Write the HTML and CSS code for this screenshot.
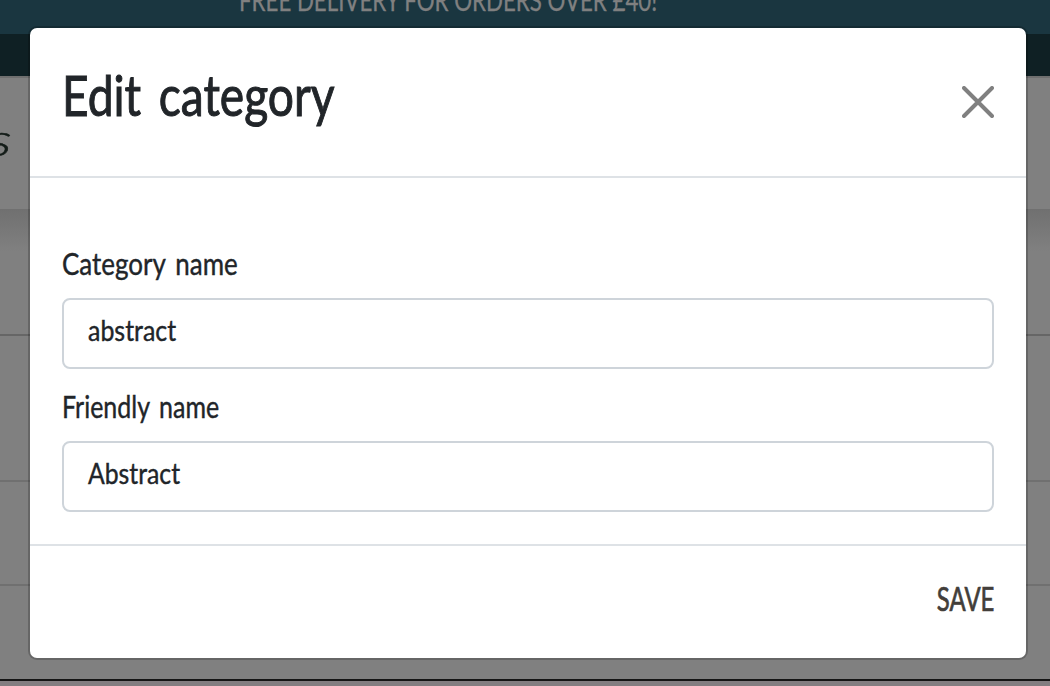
FILE: index.html
```html
<!DOCTYPE html>
<html lang="en">
<head>
<meta charset="utf-8">
<title>Edit category</title>
<link rel="stylesheet" href="styles.css">
</head>
<body>
<div class="page">
  <div class="banner"><span class="banner-text">FREE DELIVERY FOR ORDERS OVER £40!</span></div>
  <div class="nav"></div>
  <div class="brand"><span class="brand-text">s</span></div>
  <div class="row row-first"></div>
  <div class="row row-second"></div>
  <div class="row row-third"></div>
  <div class="row row-last"></div>
  <div class="page-end"></div>
</div>
<div class="modal" role="dialog">
  <div class="modal-header">
    <h1 class="title"><span class="title-text">Edit category</span></h1>
    <button class="close" aria-label="Close">
      <svg class="close-icon" width="32" height="32" viewBox="0 0 16 16" fill="none" stroke="currentColor" stroke-width="2" stroke-linecap="round"><path d="M1 1 15 15M15 1 1 15"/></svg>
    </button>
  </div>
  <div class="modal-body">
    <div class="label"><span class="label-category">Category name</span></div>
    <div class="field"><span class="value-category">abstract</span></div>
    <div class="label"><span class="label-friendly">Friendly name</span></div>
    <div class="field"><span class="value-friendly">Abstract</span></div>
  </div>
  <div class="modal-footer"><button class="save"><span class="save-text">SAVE</span></button></div>
</div>
</body>
</html>
```
FILE: styles.css
```css
* { box-sizing: border-box; }
body { margin: 0; width: 1050px; height: 686px; overflow: hidden; position: relative; font-family: Lato, "Open Sans", sans-serif; color: #212529; background: #808080; }
span { display: inline-block; white-space: nowrap; transform-origin: left center; }
.page { height: 686px; display: flex; flex-direction: column; overflow: hidden; }
.banner { height: 34px; flex: none; display: flex; align-items: flex-start; background: #1a3640; color: #808080; padding-left: 239px; overflow: hidden; }
.banner-text { font-size: 28px; line-height: 34px; margin-top: -17px; transform: scaleX(.795); -webkit-text-stroke: .3px currentColor; }
.nav { height: 42px; flex: none; background: #0f2024; }
.brand { height: 133px; flex: none; border-top: 2px solid #6f6f6f; color: #131c18; overflow: hidden; padding-top: 38px; }
.brand-text { font-size: 46px; line-height: 46px; font-weight: 300; font-style: italic; margin-left: -13px; transform: scaleX(1.38); -webkit-text-stroke: .5px currentColor; }
.row { flex: none; border-bottom: 2px solid #707070; }
.row-first { height: 127px; border-color: #666; background: linear-gradient(#707070, #808080 42px); }
.row-second { height: 146px; }
.row-third { height: 104px; }
.row-last { height: 95px; border-color: #151515; }
.page-end { flex: 1; background: #837e81; }
.modal { position: absolute; left: 30px; top: 28px; width: 996px; height: 630px; background: #fff; border-radius: 7px; box-shadow: 0 0 0 2px rgba(0,0,0,.2); display: flex; flex-direction: column; }
.modal-header { height: 150px; flex: none; border-bottom: 2px solid #dee2e6; padding: 0 32px; display: flex; align-items: center; justify-content: space-between; }
.title { margin: 0 0 14px; font-size: 56px; line-height: 68px; font-weight: 400; -webkit-text-stroke: 1px currentColor; }
.title-text { transform: scaleX(.824); word-spacing: 7px; }
button { border: 0; padding: 0; background: none; font-family: inherit; }
.close { width: 32px; height: 32px; color: #808080; }
.close-icon { display: block; }
.modal-body { flex: 1; padding: 65px 32px 0; }
.label { height: 55px; font-size: 31px; line-height: 40px; -webkit-text-stroke: .4px currentColor; }
.label-category { transform: scaleX(.838); word-spacing: 4px; }
.label-friendly { transform: scaleX(.806); word-spacing: 4px; }
.field { height: 71px; border: 2px solid #ced4da; border-radius: 8px; padding: 9px 24px; font-size: 28px; line-height: 42px; margin-bottom: 17px; -webkit-text-stroke: .4px currentColor; }
.value-category { transform: scaleX(.89); }
.value-friendly { transform: scaleX(.885); }
.modal-footer { height: 114px; flex: none; border-top: 2px solid #dee2e6; padding: 31px 32px; display: flex; justify-content: flex-end; align-items: flex-start; }
.save { color: #423e3a; font-size: 33px; line-height: 42px; -webkit-text-stroke: .7px currentColor; }
.save-text { transform: scaleX(.725); transform-origin: right center; }
```
